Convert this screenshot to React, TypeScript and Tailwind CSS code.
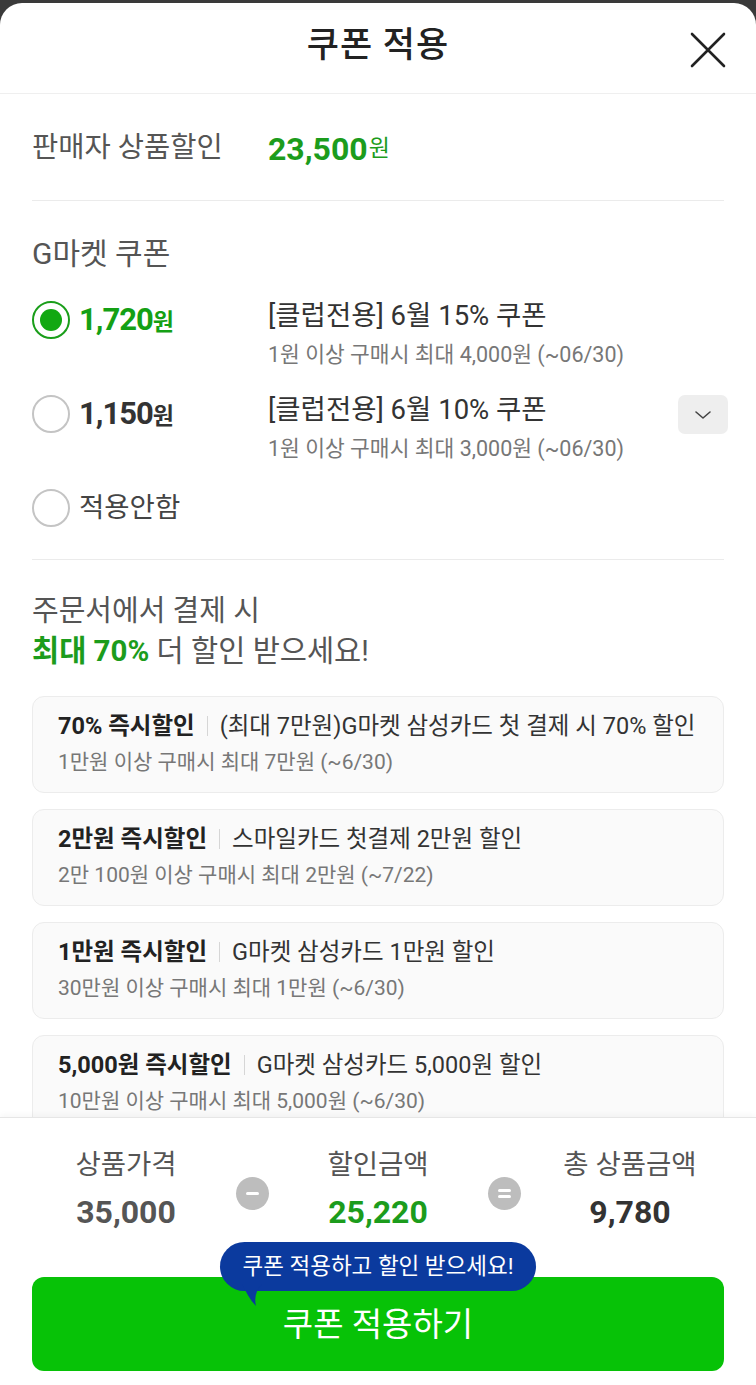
import React from "react";

const font = "font-['Roboto','Noto_Sans_CJK_KR',sans-serif]";

const cards = [
  {
    title: "70% 즉시할인",
    desc: "(최대 7만원)G마켓 삼성카드 첫 결제 시 70% 할인",
    sub: "1만원 이상 구매시 최대 7만원 (~6/30)",
  },
  {
    title: "2만원 즉시할인",
    desc: "스마일카드 첫결제 2만원 할인",
    sub: "2만 100원 이상 구매시 최대 2만원 (~7/22)",
  },
  {
    title: "1만원 즉시할인",
    desc: "G마켓 삼성카드 1만원 할인",
    sub: "30만원 이상 구매시 최대 1만원 (~6/30)",
  },
  {
    title: "5,000원 즉시할인",
    desc: "G마켓 삼성카드 5,000원 할인",
    sub: "10만원 이상 구매시 최대 5,000원 (~6/30)",
  },
];

function Radio({ checked }: { checked?: boolean }) {
  return checked ? (
    <span className="w-[38px] h-[38px] rounded-full border-2 border-[#1a9e1a] flex items-center justify-center shrink-0">
      <span className="w-[22px] h-[22px] rounded-full bg-[#12a812]" />
    </span>
  ) : (
    <span className="w-[38px] h-[38px] rounded-full border-2 border-[#c4c4c4] shrink-0" />
  );
}

function Op({ sign }: { sign: "-" | "=" }) {
  return (
    <span className="w-[33px] h-[33px] rounded-full bg-[#bdbdbd] flex flex-col items-center justify-center gap-[3px] mt-[6px]">
      <span className="w-[13px] h-[3px] rounded-full bg-white" />
      {sign === "=" && <span className="w-[13px] h-[3px] rounded-full bg-white" />}
    </span>
  );
}

export default function App() {
  return (
    <div className={`h-[1385px] bg-[#3a3a3a] pt-[3px] ${font}`}>
      <div className="h-full bg-white rounded-t-[22px] flex flex-col overflow-hidden">
        {/* Header */}
        <div className="relative h-[91px] shrink-0 flex items-center justify-center border-b border-[#efefef]">
          <h1 className="text-[35px] font-medium text-[#222] tracking-[1px] -mt-[4px]">쿠폰 적용</h1>
          <button className="absolute right-[28px] top-[27px] w-[40px] h-[40px] flex items-center justify-center">
            <svg width="38" height="38" viewBox="0 0 38 38" fill="none" stroke="#222" strokeWidth="2.6" strokeLinecap="round">
              <path d="M3 3 L35 35 M35 3 L3 35" />
            </svg>
          </button>
        </div>

        {/* Scroll content */}
        <div className="flex-1 overflow-hidden px-[32px]">
          <div className="flex items-center h-[107px] border-b border-[#ebebeb] pt-[3px]">
            <span className="w-[236px] text-[28.5px] text-[#555]">판매자 상품할인</span>
            <span className="text-[32px] font-bold text-[#1c9c1c]">23,500</span>
            <span className="text-[23px] text-[#1c9c1c] ml-[1px] mt-[2px]">원</span>
          </div>

          <div className="pt-[34px] pb-[31px] border-b border-[#ebebeb]">
            <div className="text-[30px] text-[#555] leading-[38px]">G마켓 쿠폰</div>

            <div className="mt-[27px] flex">
              <div className="w-[236px] flex items-center gap-[9px] h-[40px]">
                <Radio checked />
                <span className="text-[31px] font-bold text-[#14a014] tracking-[-1px]">1,720<span className="text-[23px]">원</span></span>
              </div>
              <div className="flex-1">
                <div className="text-[27.5px] text-[#333] leading-[36px] -mt-[2px]">[클럽전용] 6월 15% 쿠폰</div>
                <div className="text-[21.5px] text-[#777] leading-[30px] mt-[6px]">1원 이상 구매시 최대 4,000원 (~06/30)</div>
              </div>
            </div>

            <div className="mt-[24px] flex">
              <div className="w-[236px] flex items-center gap-[9px] h-[40px]">
                <Radio />
                <span className="text-[31px] font-bold text-[#333] tracking-[-1px]">1,150<span className="text-[23px]">원</span></span>
              </div>
              <div className="flex-1">
                <div className="text-[27.5px] text-[#333] leading-[36px] -mt-[2px]">[클럽전용] 6월 10% 쿠폰</div>
                <div className="text-[21.5px] text-[#777] leading-[30px] mt-[6px]">1원 이상 구매시 최대 3,000원 (~06/30)</div>
              </div>
              <button className="w-[50px] h-[39px] rounded-[7px] bg-[#eeeeee] flex items-center justify-center -mr-[4px] mt-[1px]">
                <svg width="18" height="10" viewBox="0 0 18 10" fill="none" stroke="#444" strokeWidth="1.6" strokeLinecap="round" strokeLinejoin="round">
                  <path d="M2 2 L9 8 L16 2" />
                </svg>
              </button>
            </div>

            <div className="mt-[24px] flex items-center gap-[9px] h-[40px]">
              <Radio />
              <span className="text-[27.5px] text-[#444]">적용안함</span>
            </div>
          </div>

          <div className="pt-[31px]">
            <div className="text-[29px] text-[#555] leading-[40px]">주문서에서 결제 시</div>
            <div className="text-[29.5px] text-[#555] leading-[40px]">
              <span className="font-bold text-[#1c9c1c]">최대 70%</span> 더 할인 받으세요!
            </div>
          </div>

          <div className="mt-[25px] flex flex-col gap-[16px]">
            {cards.map((c) => (
              <div key={c.title} className="h-[97px] rounded-[12px] border border-[#ececec] bg-[#fafafa] px-[25px] pt-[12px]">
                <div className="flex items-center text-[23.5px] leading-[34px] whitespace-nowrap">
                  <span className="font-bold text-[#222]">{c.title}</span>
                  <span className="mx-[12px] w-px h-[20px] bg-[#d6d6d6]" />
                  <span className="text-[#333]">{c.desc}</span>
                </div>
                <div className="text-[21px] text-[#777] leading-[30px] mt-[4px]">{c.sub}</div>
              </div>
            ))}
          </div>
        </div>

        {/* Bottom panel */}
        <div className="shrink-0 h-[268px] border-t border-[#e6e6e6] shadow-[0_-2px_6px_rgba(0,0,0,0.04)] px-[32px] pt-[28px]">
          <div className="flex items-center justify-between">
            <div className="w-[188px] flex flex-col items-center">
              <span className="text-[27.5px] text-[#555] leading-[38px]">상품가격</span>
              <span className="text-[32px] font-bold text-[#555] leading-[44px] mt-[6px]">35,000</span>
            </div>
            <Op sign="-" />
            <div className="w-[188px] flex flex-col items-center">
              <span className="text-[27.5px] text-[#555] leading-[38px]">할인금액</span>
              <span className="text-[32px] font-bold text-[#1c9c1c] leading-[44px] mt-[6px]">25,220</span>
            </div>
            <Op sign="=" />
            <div className="w-[188px] flex flex-col items-center">
              <span className="text-[27.5px] text-[#555] leading-[38px]">총 상품금액</span>
              <span className="text-[32px] font-bold text-[#333] leading-[44px] mt-[6px]">9,780</span>
            </div>
          </div>

          <div className="relative mt-[43px]">
            <button className="w-full h-[94px] rounded-[12px] bg-[#07c207] text-white text-[33px] flex items-center justify-center pt-[2px]">
              쿠폰 적용하기
            </button>
            <div className="absolute left-[188px] -top-[35px]">
              <div className="relative h-[49px] w-[316px] rounded-full bg-[#0b3a9e] flex items-center justify-center text-white text-[22.5px] whitespace-nowrap">
                쿠폰 적용하고 할인 받으세요!
              </div>
              <svg className="absolute left-[22px] top-[42px]" width="20" height="22" viewBox="0 0 20 22">
                <path d="M0 0 H20 C14 6 12 14 14 22 C8 16 4 8 0 0 Z" fill="#0b3a9e" />
              </svg>
            </div>
          </div>
        </div>
      </div>
    </div>
  );
}
